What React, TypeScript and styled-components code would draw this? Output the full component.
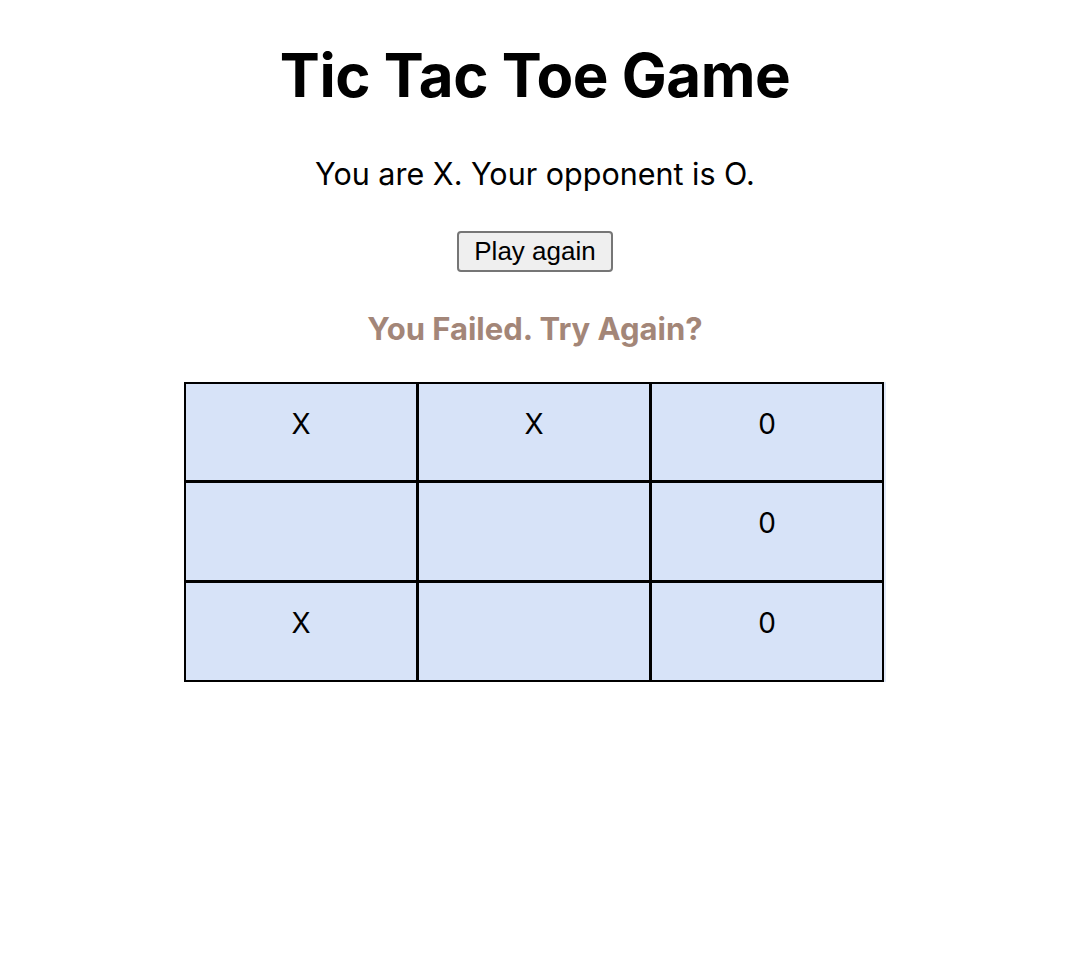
import React from "react";
import styled, { createGlobalStyle } from "styled-components";

const Global = createGlobalStyle`
  html, body { margin: 0; padding: 0; background: #ffffff; }
  body { font-family: Inter, "Noto Sans", sans-serif; color: #000; }
`;

const Page = styled.main`
  display: flex;
  flex-direction: column;
  align-items: center;
  padding-top: 39px;
`;

const Title = styled.h1`
  margin: 0;
  font-family: Inter, sans-serif;
  font-weight: 700;
  font-size: 60px;
  line-height: 73px;
  letter-spacing: -0.5px;
`;

const Subtitle = styled.p`
  margin: 43px 0 0;
  font-size: 30.5px;
  line-height: 37px;
  font-weight: 400;
`;

const Button = styled.button`
  margin-top: 39px;
  height: 41px;
  padding: 0 15px;
  font-family: "Liberation Sans", Arial, sans-serif;
  font-size: 26px;
  color: #000;
  background: #efefef;
  border: 2px solid #767676;
  border-radius: 4px;
  cursor: pointer;
`;

const Status = styled.h2`
  margin: 38px 0 0;
  font-size: 31px;
  line-height: 38px;
  font-weight: 700;
  color: #a38678;
`;

const Board = styled.div`
  margin-top: 34px;
  width: 700px;
  box-sizing: border-box;
  display: grid;
  grid-template-columns: 230px 230px 230px;
  grid-template-rows: 96px 97px 97px;
  gap: 3px;
  background: #000;
  border: 2px solid #000;
  box-shadow: 2px 0 0 #e2eaf9;
  transform: translateX(-1px);
`;

const Cell = styled.div`
  background: #d7e3f8;
  display: flex;
  justify-content: center;
  align-items: flex-start;
  padding-top: 23px;
  font-size: 28px;
  line-height: 34px;
  font-weight: 400;
`;

const cells = ["X", "X", "0", "", "", "0", "X", "", "0"];

export default function App() {
  return (
    <>
      <Global />
      <Page>
        <Title>Tic Tac Toe Game</Title>
        <Subtitle>You are X. Your opponent is O.</Subtitle>
        <Button>Play again</Button>
        <Status>You Failed. Try Again?</Status>
        <Board>
          {cells.map((c, i) => (
            <Cell key={i}>{c}</Cell>
          ))}
        </Board>
      </Page>
    </>
  );
}
